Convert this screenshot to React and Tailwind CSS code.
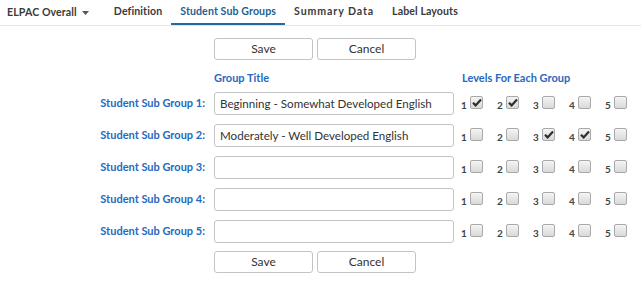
import React, { useState } from "react";

const tabs = ["Definition", "Student Sub Groups", "Summary Data", "Label Layouts"];

const initialGroups = [
  { title: "Beginning - Somewhat Developed English", levels: [true, true, false, false, false] },
  { title: "Moderately - Well Developed English", levels: [false, false, true, true, false] },
  { title: "", levels: [false, false, false, false, false] },
  { title: "", levels: [false, false, false, false, false] },
  { title: "", levels: [false, false, false, false, false] },
];

const Check = ({ checked, onClick }) => (
  <span
    onClick={onClick}
    className="w-[13px] h-[13px] border border-[#a9a9a9] rounded-[2px] bg-gradient-to-b from-[#f4f4f4] to-[#d9d9d9] flex items-center justify-center cursor-pointer"
  >
    {checked && (
      <svg width="10" height="9" viewBox="0 0 10 9">
        <path d="M1 4.8 L3.6 7.4 L9 1.4" fill="none" stroke="#2d2d2d" strokeWidth="2.2" />
      </svg>
    )}
  </span>
);

const Buttons = () => (
  <div className="flex gap-[4px] pl-[214px]">
    <button className="w-[99px] h-[22px] border border-[#c4c4c4] rounded-[3px] bg-white text-[12px] text-[#333]">Save</button>
    <button className="w-[99px] h-[22px] border border-[#c4c4c4] rounded-[3px] bg-white text-[12px] text-[#333]">Cancel</button>
  </div>
);

export default function App() {
  const [groups, setGroups] = useState(initialGroups);

  const toggle = (g, l) => {
    setGroups(groups.map((row, i) => i !== g ? row : { ...row, levels: row.levels.map((v, j) => j === l ? !v : v) }));
  };

  return (
    <div className="w-[641px] h-[282px] bg-white font-['Lato','Open_Sans',sans-serif] overflow-hidden">
      {/* Tabs */}
      <div className="flex items-end h-[26px] border-b border-[#e3e3e3] pl-[7px] text-[10.6px] font-bold text-[#3a3a3a] tracking-[0.1px]">
        <div className="flex items-center gap-[5px] h-[25px] pr-[16px]">
          ELPAC Overall
          <svg width="7" height="4" viewBox="0 0 7 4"><path d="M0 0 H7 L3.5 4 Z" fill="#555" /></svg>
        </div>
        {tabs.map((t, i) => (
          <div
            key={t}
            className={`h-[26px] px-[9px] flex items-center pt-[2px] border-b-2 ${i === 1 ? "border-[#1f6aa5] text-[#1f5f94]" : "border-transparent"} ${i === 2 ? "tracking-[0.9px]" : ""}`}
          >
            {t}
          </div>
        ))}
      </div>

      <div className="pt-[12px]">
        <Buttons />

        {/* Headers */}
        <div className="flex items-center h-[20px] mt-[8px] text-[11px] font-bold text-[#2769c2]">
          <div className="pl-[214px] w-[462px]">Group Title</div>
          <div>Levels For Each Group</div>
        </div>

        {/* Rows */}
        <div className="flex flex-col gap-[10px] mt-[4px]">
          {groups.map((row, g) => (
            <div key={g} className="flex items-center h-[22px]">
              <div className="w-[206px] pr-[1px] text-right text-[11px] font-bold text-[#2769c2]">
                Student Sub Group {g + 1}:
              </div>
              <input
                value={row.title}
                onChange={(e) => setGroups(groups.map((r, i) => i === g ? { ...r, title: e.target.value } : r))}
                className="ml-[8px] w-[240px] h-[23px] border border-[#c4c4c4] rounded-[3px] px-[5px] text-[11.6px] text-[#333] outline-none"
              />
              <div className="flex ml-[7px]">
                {row.levels.map((v, l) => (
                  <div key={l} className="flex items-start w-[36px] gap-[2px]">
                    <span className="text-[10px] font-bold text-[#444] w-[7px] pt-[3px] leading-[12px]">{l + 1}</span>
                    <Check checked={v} onClick={() => toggle(g, l)} />
                  </div>
                ))}
              </div>
            </div>
          ))}
        </div>

        <div className="mt-[9px]">
          <Buttons />
        </div>
      </div>
    </div>
  );
}
